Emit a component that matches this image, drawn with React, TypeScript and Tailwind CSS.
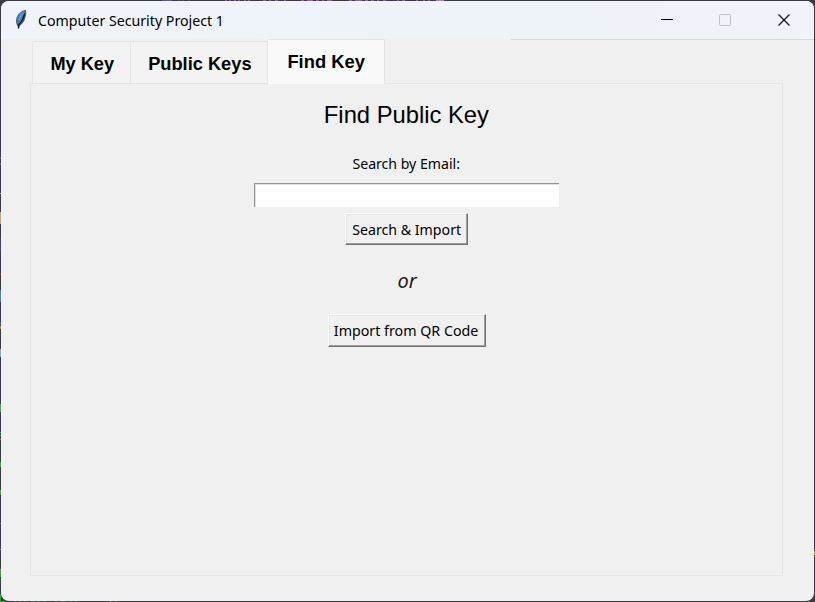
import React from "react";

type Mark = { at: number; size: number; color: string };

const leftMarks: Mark[] = [
  { at: 157, size: 2, color: "#5c5f7c" },
  { at: 163, size: 2, color: "#5c6688" },
  { at: 193, size: 1, color: "#aaaaaa" },
  { at: 212, size: 12, color: "#b9a58c" },
  { at: 239, size: 12, color: "#46438a" },
  { at: 273, size: 2, color: "#85343f" },
  { at: 290, size: 12, color: "#4682a8" },
  { at: 322, size: 3, color: "#3f5fc0" },
  { at: 326, size: 3, color: "#bd8063" },
  { at: 349, size: 8, color: "#91a6b3" },
  { at: 404, size: 8, color: "#4ba070" },
  { at: 432, size: 1, color: "#4ba070" },
  { at: 435, size: 1, color: "#4ba070" },
  { at: 439, size: 1, color: "#4ba070" },
  { at: 462, size: 5, color: "#48a150" },
  { at: 490, size: 5, color: "#48a150" },
  { at: 523, size: 1, color: "#4b8070" },
  { at: 549, size: 1, color: "#48a150" },
  { at: 569, size: 8, color: "#48a150" },
  { at: 594, size: 7, color: "#1fae2c" },
];

const topMarks: Mark[] = [
  { at: 162, size: 10, color: "#5c5a8c" },
  { at: 178, size: 2, color: "#4b4880" },
  { at: 182, size: 2, color: "#4b4880" },
  { at: 188, size: 2, color: "#4b4880" },
  { at: 225, size: 2, color: "#8466a8" },
  { at: 229, size: 2, color: "#6a5fb0" },
  { at: 234, size: 2, color: "#8466a8" },
  { at: 238, size: 2, color: "#8466a8" },
  { at: 244, size: 2, color: "#8466a8" },
  { at: 248, size: 2, color: "#8466a8" },
  { at: 263, size: 3, color: "#8466a8" },
  { at: 269, size: 2, color: "#8466a8" },
  { at: 275, size: 3, color: "#8466a8" },
  { at: 284, size: 2, color: "#8466a8" },
  { at: 301, size: 3, color: "#8466a8" },
  { at: 307, size: 6, color: "#8466a8" },
  { at: 316, size: 3, color: "#8466a8" },
  { at: 322, size: 2, color: "#8466a8" },
  { at: 327, size: 5, color: "#8466a8" },
  { at: 349, size: 3, color: "#8466a8" },
  { at: 355, size: 7, color: "#8466a8" },
  { at: 365, size: 3, color: "#8466a8" },
  { at: 371, size: 3, color: "#8466a8" },
  { at: 377, size: 2, color: "#8466a8" },
  { at: 383, size: 3, color: "#8466a8" },
  { at: 397, size: 2, color: "#8466a8" },
  { at: 402, size: 3, color: "#8466a8" },
  { at: 416, size: 2, color: "#8466a8" },
  { at: 423, size: 2, color: "#8466a8" },
  { at: 428, size: 2, color: "#8466a8" },
  { at: 436, size: 8, color: "#a284c4" },
];

const bottomMarks: Mark[] = [
  { at: 0, size: 5, color: "#1fae2c" },
  { at: 14, size: 2, color: "#45704e" },
  { at: 19, size: 2, color: "#45704e" },
  { at: 24, size: 2, color: "#45704e" },
  { at: 31, size: 4, color: "#45704e" },
  { at: 37, size: 3, color: "#45704e" },
  { at: 43, size: 3, color: "#45704e" },
  { at: 55, size: 2, color: "#45704e" },
  { at: 61, size: 5, color: "#45704e" },
  { at: 70, size: 2, color: "#45704e" },
  { at: 75, size: 2, color: "#45704e" },
  { at: 109, size: 3, color: "#45704e" },
  { at: 115, size: 2, color: "#45704e" },
];

function Marks({ marks, vertical }: { marks: Mark[]; vertical?: boolean }) {
  return (
    <>
      {marks.map((m) => (
        <i
          key={m.at}
          className={vertical ? "absolute left-0 w-px" : "absolute top-0 h-px"}
          style={
            vertical
              ? { top: m.at, height: m.size, background: m.color }
              : { left: m.at, width: m.size, background: m.color }
          }
        />
      ))}
    </>
  );
}

function Feather() {
  return (
    <svg className="ml-[13px] h-[22px] w-[16px] shrink-0" viewBox="0 0 16 22">
      <path d="M11.500 1.500C8 2 4.500 5.500 3 9C2.200 12 2.500 14.500 4 17C7.500 15.500 9.700 12.500 10.700 9C11.500 6.500 12 3.500 11.500 1.500Z" fill="#3f7fc4" stroke="#5d6066" strokeWidth="1.200" />
      <path d="M10.500 4.500C10 8.500 8 12.500 5 15.500L4.500 19.500" fill="none" stroke="#101318" strokeWidth="1.400" />
      <path d="M9.500 3.800C7.500 5.500 5.800 8 4.800 11" fill="none" stroke="#5fa0e4" strokeWidth="1.600" />
    </svg>
  );
}

function ClassicButton({ children, className }: { children: React.ReactNode; className: string }) {
  return (
    <button
      className={`flex shrink-0 items-center justify-center border border-t-white border-l-white border-r-[#6f6f6f] border-b-[#6f6f6f] bg-[#f0f0f0] whitespace-nowrap shadow-[inset_-1px_-1px_0_#a0a0a0,inset_1px_1px_0_#e6e6e6] ${className}`}
    >
      {children}
    </button>
  );
}

export default function App() {
  return (
    <div className="relative h-[602px] w-[815px] overflow-hidden bg-[#3c3a43] p-px font-['Noto_Sans',sans-serif] text-black">
      <Marks marks={leftMarks} vertical />
      <Marks marks={topMarks} />
      <div className="absolute bottom-0 left-0 h-px w-full">
        <Marks marks={bottomMarks} />
      </div>
      <i className="absolute top-[551px] right-0 h-[4px] w-px bg-[#b0a860]" />
      <div className="relative flex h-[600px] w-[813px] flex-col overflow-hidden rounded-[8px] bg-[#f0f0f0]">
        <header className="flex h-[38px] shrink-0 items-center bg-linear-to-r from-[#f0f3fa] via-[#eef3f9] to-[#f0f3f9]">
          <Feather />
          <h1 className="-mt-px ml-[8px] origin-left scale-x-[0.945] text-[15px] leading-[20px] whitespace-nowrap">
            Computer Security Project 1
          </h1>
          <div className="ml-auto flex items-center">
            <svg className="h-[38px] w-[153px]" viewBox="0 0 153 38" fill="none">
              <path d="M0 18.500H12" stroke="#000" />
              <rect x="58.500" y="13.500" width="11" height="11" rx="1" stroke="#bfc2c6" />
              <path d="M117.500 13.500L128.500 24.500M128.500 13.500L117.500 24.500" stroke="#111" strokeWidth="1.200" />
            </svg>
          </div>
        </header>
        <div className="ml-[510px] h-px shrink-0 bg-[#d5d9dd]" />
        <main className="-mt-px ml-[29px] w-[753px]">
          <nav className="ml-[2px] flex h-[44px] items-end font-['Liberation_Sans',sans-serif] text-[19px] leading-[22px] font-bold">
            <div className="flex h-[42px] w-[99px] items-center justify-center border border-b-0 border-[#e5e5e5] bg-[#f3f3f3] pt-[2px] pl-px">
              <span className="scale-x-[0.955] whitespace-nowrap">My Key</span>
            </div>
            <div className="flex h-[42px] w-[137px] items-center justify-center border border-b-0 border-l-0 border-[#e5e5e5] bg-[#f3f3f3] pt-[2px] pl-[2px]">
              <span className="scale-x-[0.96] whitespace-nowrap">Public Keys</span>
            </div>
            <div className="relative z-10 -mb-px flex h-[45px] w-[117px] items-center justify-center border border-b-0 border-l-0 border-[#e5e5e5] bg-[#f9f9f9] pl-px">
              <span className="scale-x-[0.965] whitespace-nowrap">Find Key</span>
            </div>
          </nav>
          <section className="flex h-[493px] w-[753px] flex-col items-center border border-[#e5e5e5]">
            <h2 className="mt-[16px] scale-x-[0.99] font-['Liberation_Sans',sans-serif] text-[24px] leading-[30px]">Find Public Key</h2>
            <label className="mt-[23px] scale-x-[0.94] text-[15px] leading-[20px] whitespace-nowrap">Search by Email:</label>
            <input className="mt-[10px] h-[24px] w-[305px] shrink-0 border-t border-l border-t-[#939393] border-l-[#939393] bg-white shadow-[inset_1px_1px_0_#e0e0e0] outline-none" />
            <ClassicButton className="mt-[6px] h-[32px] w-[123px]">
              <span className="scale-x-[0.945] text-[15px] leading-[20px]">Search &amp; Import</span>
            </ClassicButton>
            <p className="mt-[22px] ml-px text-[20px] leading-[28px] text-[#1c1c1c] italic">or</p>
            <ClassicButton className="mt-[19px] h-[33px] w-[158px] pb-px">
              <span className="scale-x-[0.95] text-[15px] leading-[20px]">Import from QR Code</span>
            </ClassicButton>
          </section>
        </main>
      </div>
    </div>
  );
}
